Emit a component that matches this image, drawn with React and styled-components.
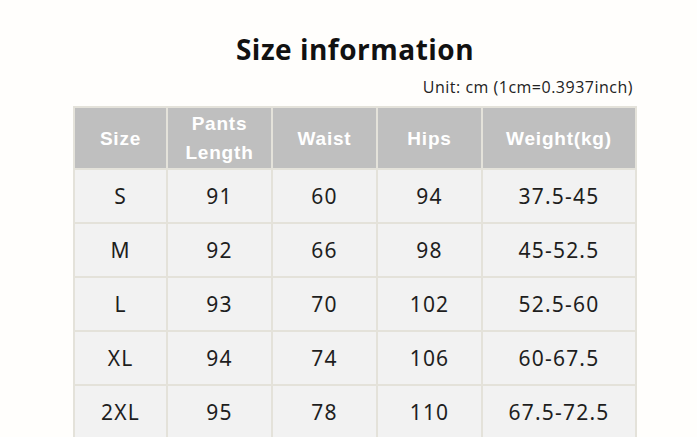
import React from 'react';
import styled, { createGlobalStyle } from "styled-components";

const GlobalStyle = createGlobalStyle`
    body {
        margin: 0;
        background: #fffefc;
        font-family: "Noto Sans", "Open Sans", sans-serif;
    }
`

const columns = ['Size', 'Pants Length', 'Waist', 'Hips', 'Weight(kg)'];
const widths = [93, 105, 105, 105, 154];

const rows = [
    ['S', '91', '60', '94', '37.5-45'],
    ['M', '92', '66', '98', '45-52.5'],
    ['L', '93', '70', '102', '52.5-60'],
    ['XL', '94', '74', '106', '60-67.5'],
    ['2XL', '95', '78', '110', '67.5-72.5'],
];

const App = () => {
    return (
        <React.Fragment>
            <GlobalStyle />
            <Page>
                <TopBar />
                <Title>Size information</Title>
                <Unit>Unit: cm (1cm=0.3937inch)</Unit>
                <Table>
                    <colgroup>
                        {widths.map((w, i) => <col key={i} style={{ width: w }} />)}
                    </colgroup>
                    <thead>
                        <tr>
                            {columns.map(c => <Th key={c}>{c}</Th>)}
                        </tr>
                    </thead>
                    <tbody>
                        {rows.map(r => (
                            <tr key={r[0]}>
                                {r.map((v, i) => <Td key={i}>{v}</Td>)}
                            </tr>
                        ))}
                    </tbody>
                </Table>
            </Page>
        </React.Fragment>
    );
}

export default App;

const Page = styled.div`
    width: 697px;
    height: 437px;
    overflow: hidden;
    display: flex;
    flex-direction: column;
    align-items: center;
`
const TopBar = styled.div`
    align-self: stretch;
    height: 3px;
    background: linear-gradient(90deg, #5e4045 0%, #6a4a4e 40%, #4a3034 58%, #8a6a70 75%, #6b4c52 100%);
`
const Title = styled.h1`
    margin: 31px 0 0 13px;
    font-family: "Open Sans", "Noto Sans", sans-serif;
    font-weight: 700;
    font-size: 28px;
    line-height: 36px;
    color: #111;
    letter-spacing: 0.5px;
`
const Unit = styled.div`
    align-self: flex-end;
    margin: 10px 64px 0 0;
    font-family: "Open Sans", "Noto Sans", sans-serif;
    font-size: 16px;
    line-height: 20px;
    letter-spacing: 0.5px;
    color: #222;
`
const Table = styled.table`
    margin: 9px 0 0 13px;
    border-collapse: collapse;
    table-layout: fixed;
    width: 562px;
    border: 2px solid #e4e2da;
`
const Th = styled.th`
    height: 60px;
    padding: 0 6px;
    background: #bfbfbf;
    color: #fff;
    font-family: "Liberation Sans", Arial, sans-serif;
    font-weight: 700;
    font-size: 19px;
    line-height: 29px;
    letter-spacing: 0.8px;
    border: 2px solid #e4e2da;
`
const Td = styled.td`
    height: 50px;
    background: #f2f2f2;
    color: #1e1e1e;
    text-align: center;
    font-family: "Noto Sans", "Open Sans", sans-serif;
    font-size: 21px;
    letter-spacing: 1.2px;
    border: 2px solid #e4e2da;
`
